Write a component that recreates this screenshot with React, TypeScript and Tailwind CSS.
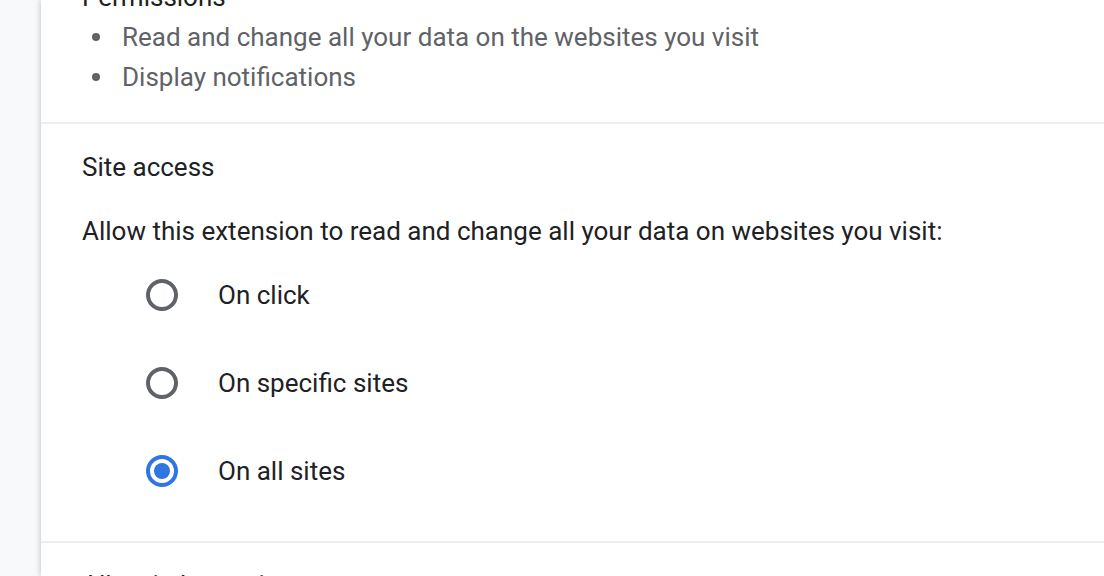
const font = { fontFamily: "Roboto, 'Liberation Sans', sans-serif" };

const permissions = [
  "Read and change all your data on the websites you visit",
  "Display notifications",
];

const options = [
  { label: "On click", checked: false },
  { label: "On specific sites", checked: false },
  { label: "On all sites", checked: true },
];

function Radio({ checked }: { checked: boolean }) {
  return (
    <span
      className={`flex h-8 w-8 shrink-0 items-center justify-center rounded-full border-4 ${
        checked ? "border-[#2f75e4]" : "border-[#5f6368]"
      }`}
    >
      {checked && <span className="h-4 w-4 rounded-full bg-[#2f75e4]" />}
    </span>
  );
}

export default function App() {
  return (
    <div
      className="flex h-[576px] w-full overflow-hidden bg-[#f8f9fa] text-[26px] leading-[40px] text-[#202124]"
      style={font}
    >
      <div className="w-[41px] shrink-0" />
      <div className="flex-1 bg-white shadow-[-1px_0_5px_rgba(60,64,67,0.25)]">
        {/* permissions */}
        <section className="-mt-[23px] px-[41px] pb-[25px]">
          <div>Permissions</div>
          <ul className="flex flex-col text-[#5f6368]">
            {permissions.map((p) => (
              <li key={p} className="flex items-center">
                <span className="ml-[10px] mr-[22px] h-[8px] w-[8px] rounded-full bg-[#5f6368]" />
                {p}
              </li>
            ))}
          </ul>
        </section>

        <div className="h-[2px] bg-[#eceef0]" />

        {/* site access */}
        <section className="px-[41px] pb-[26px] pt-[23px]">
          <div>Site access</div>
          <div className="mt-6">
            Allow this extension to read and change all your data on websites you visit:
          </div>
          <div className="flex flex-col">
            {options.map((o) => (
              <label key={o.label} className="flex h-[88px] items-center pl-16">
                <Radio checked={o.checked} />
                <span className="ml-10">{o.label}</span>
              </label>
            ))}
          </div>
        </section>

        <div className="h-[2px] bg-[#eceef0]" />

        <section className="px-[41px] pt-[22px]">
          <div>Allow in Incognito</div>
        </section>
      </div>
    </div>
  );
}
